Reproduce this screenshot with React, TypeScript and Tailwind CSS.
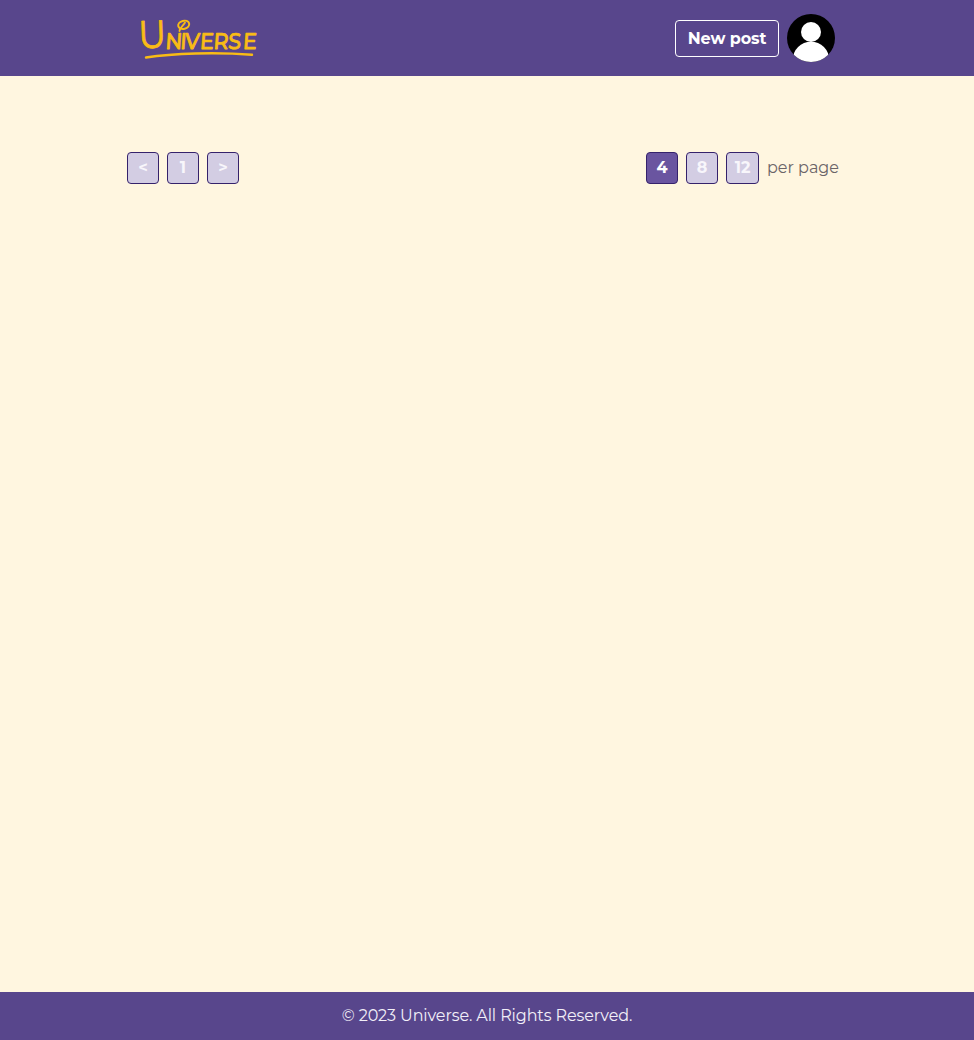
import type { ReactNode } from "react";

function Logo() {
  return (
    <svg width="120" height="48" viewBox="0 0 120 48" fill="none" className="block overflow-visible" aria-label="Universe">
      <g fill="#f9bc15" stroke="#f9bc15" strokeLinejoin="round" fontFamily="'Montserrat', sans-serif">
        <text transform="translate(-0.2 34.6) rotate(-2) scale(0.9 1)" fontSize="39" fontWeight="400" strokeWidth="0.8">U</text>
        <text
          transform="translate(0.8 35) skewX(-4) scale(0.92 1)"
          x="27.5 43.5 48.5 65 79.5 95.5 111.5"
          y="0 0 0 0 0 -0.3 -0.3"
          fontSize="22.5"
          fontWeight="500"
          strokeWidth="0.8"
        >
          NIVERSE
        </text>
      </g>
      <g stroke="#f9bc15" strokeLinecap="round">
        <ellipse cx="44.7" cy="10.8" rx="5.6" ry="4" strokeWidth="2" transform="rotate(-15 44.7 10.8)" />
        <path d="M40.5 17C40.5 14 44 12 46 8.5" strokeWidth="1.8" />
        <path d="M7 43.5C34 39.3 77 38 113 40.8" strokeWidth="2.4" />
      </g>
    </svg>
  );
}

function Avatar() {
  return (
    <svg width="48" height="48" viewBox="0 0 48 48" className="block" aria-hidden="true">
      <defs>
        <clipPath id="avatar">
          <circle cx="24" cy="24" r="24" />
        </clipPath>
      </defs>
      <g clipPath="url(#avatar)">
        <rect width="48" height="48" fill="#000" />
        <circle cx="24" cy="18" r="10" fill="#fff" />
        <circle cx="24" cy="46" r="18.3" fill="#fff" />
      </g>
    </svg>
  );
}

function PageButton({ active = false, children }: { active?: boolean; children: ReactNode }) {
  return (
    <button
      className={
        active
          ? "flex h-8 min-w-8 items-center justify-center rounded border border-[#35226b] bg-[#6a55a0] px-[7px] font-bold text-white"
          : "flex h-8 min-w-8 items-center justify-center rounded border border-[#35226b] bg-[#d3cde3] px-[7px] font-bold text-[#f8f6fb]"
      }
    >
      {children}
    </button>
  );
}

export default function App() {
  return (
    <div className="flex min-h-screen flex-col bg-[#fff6e0] font-['Montserrat',sans-serif] text-base text-[#6b6468]">
      <header className="h-[76px] bg-[#58468c]">
        <div className="mx-auto flex h-full w-[696px] items-center justify-between">
          <Logo />
          <div className="flex items-center gap-2">
            <button className="flex h-[37px] w-[104px] items-center justify-center rounded border border-white pt-px font-bold tracking-[-0.1px] whitespace-nowrap text-white">
              New post
            </button>
            <Avatar />
          </div>
        </div>
      </header>
      <main className="flex-1 pt-[76px]">
        <div className="mx-auto flex w-[720px] items-center justify-between pr-2">
          <nav className="flex gap-2">
            <PageButton>&lt;</PageButton>
            <PageButton>1</PageButton>
            <PageButton>&gt;</PageButton>
          </nav>
          <div className="grid grid-cols-[32px_32px_33px_72px] items-center gap-2">
            <PageButton active>4</PageButton>
            <PageButton>8</PageButton>
            <PageButton>12</PageButton>
            <span className="whitespace-nowrap">per page</span>
          </div>
        </div>
      </main>
      <footer className="flex h-12 items-center justify-center bg-[#58468c] tracking-[-0.11px] text-[#f2eff8]">
        © 2023 Universe. All Rights Reserved.
      </footer>
    </div>
  );
}
